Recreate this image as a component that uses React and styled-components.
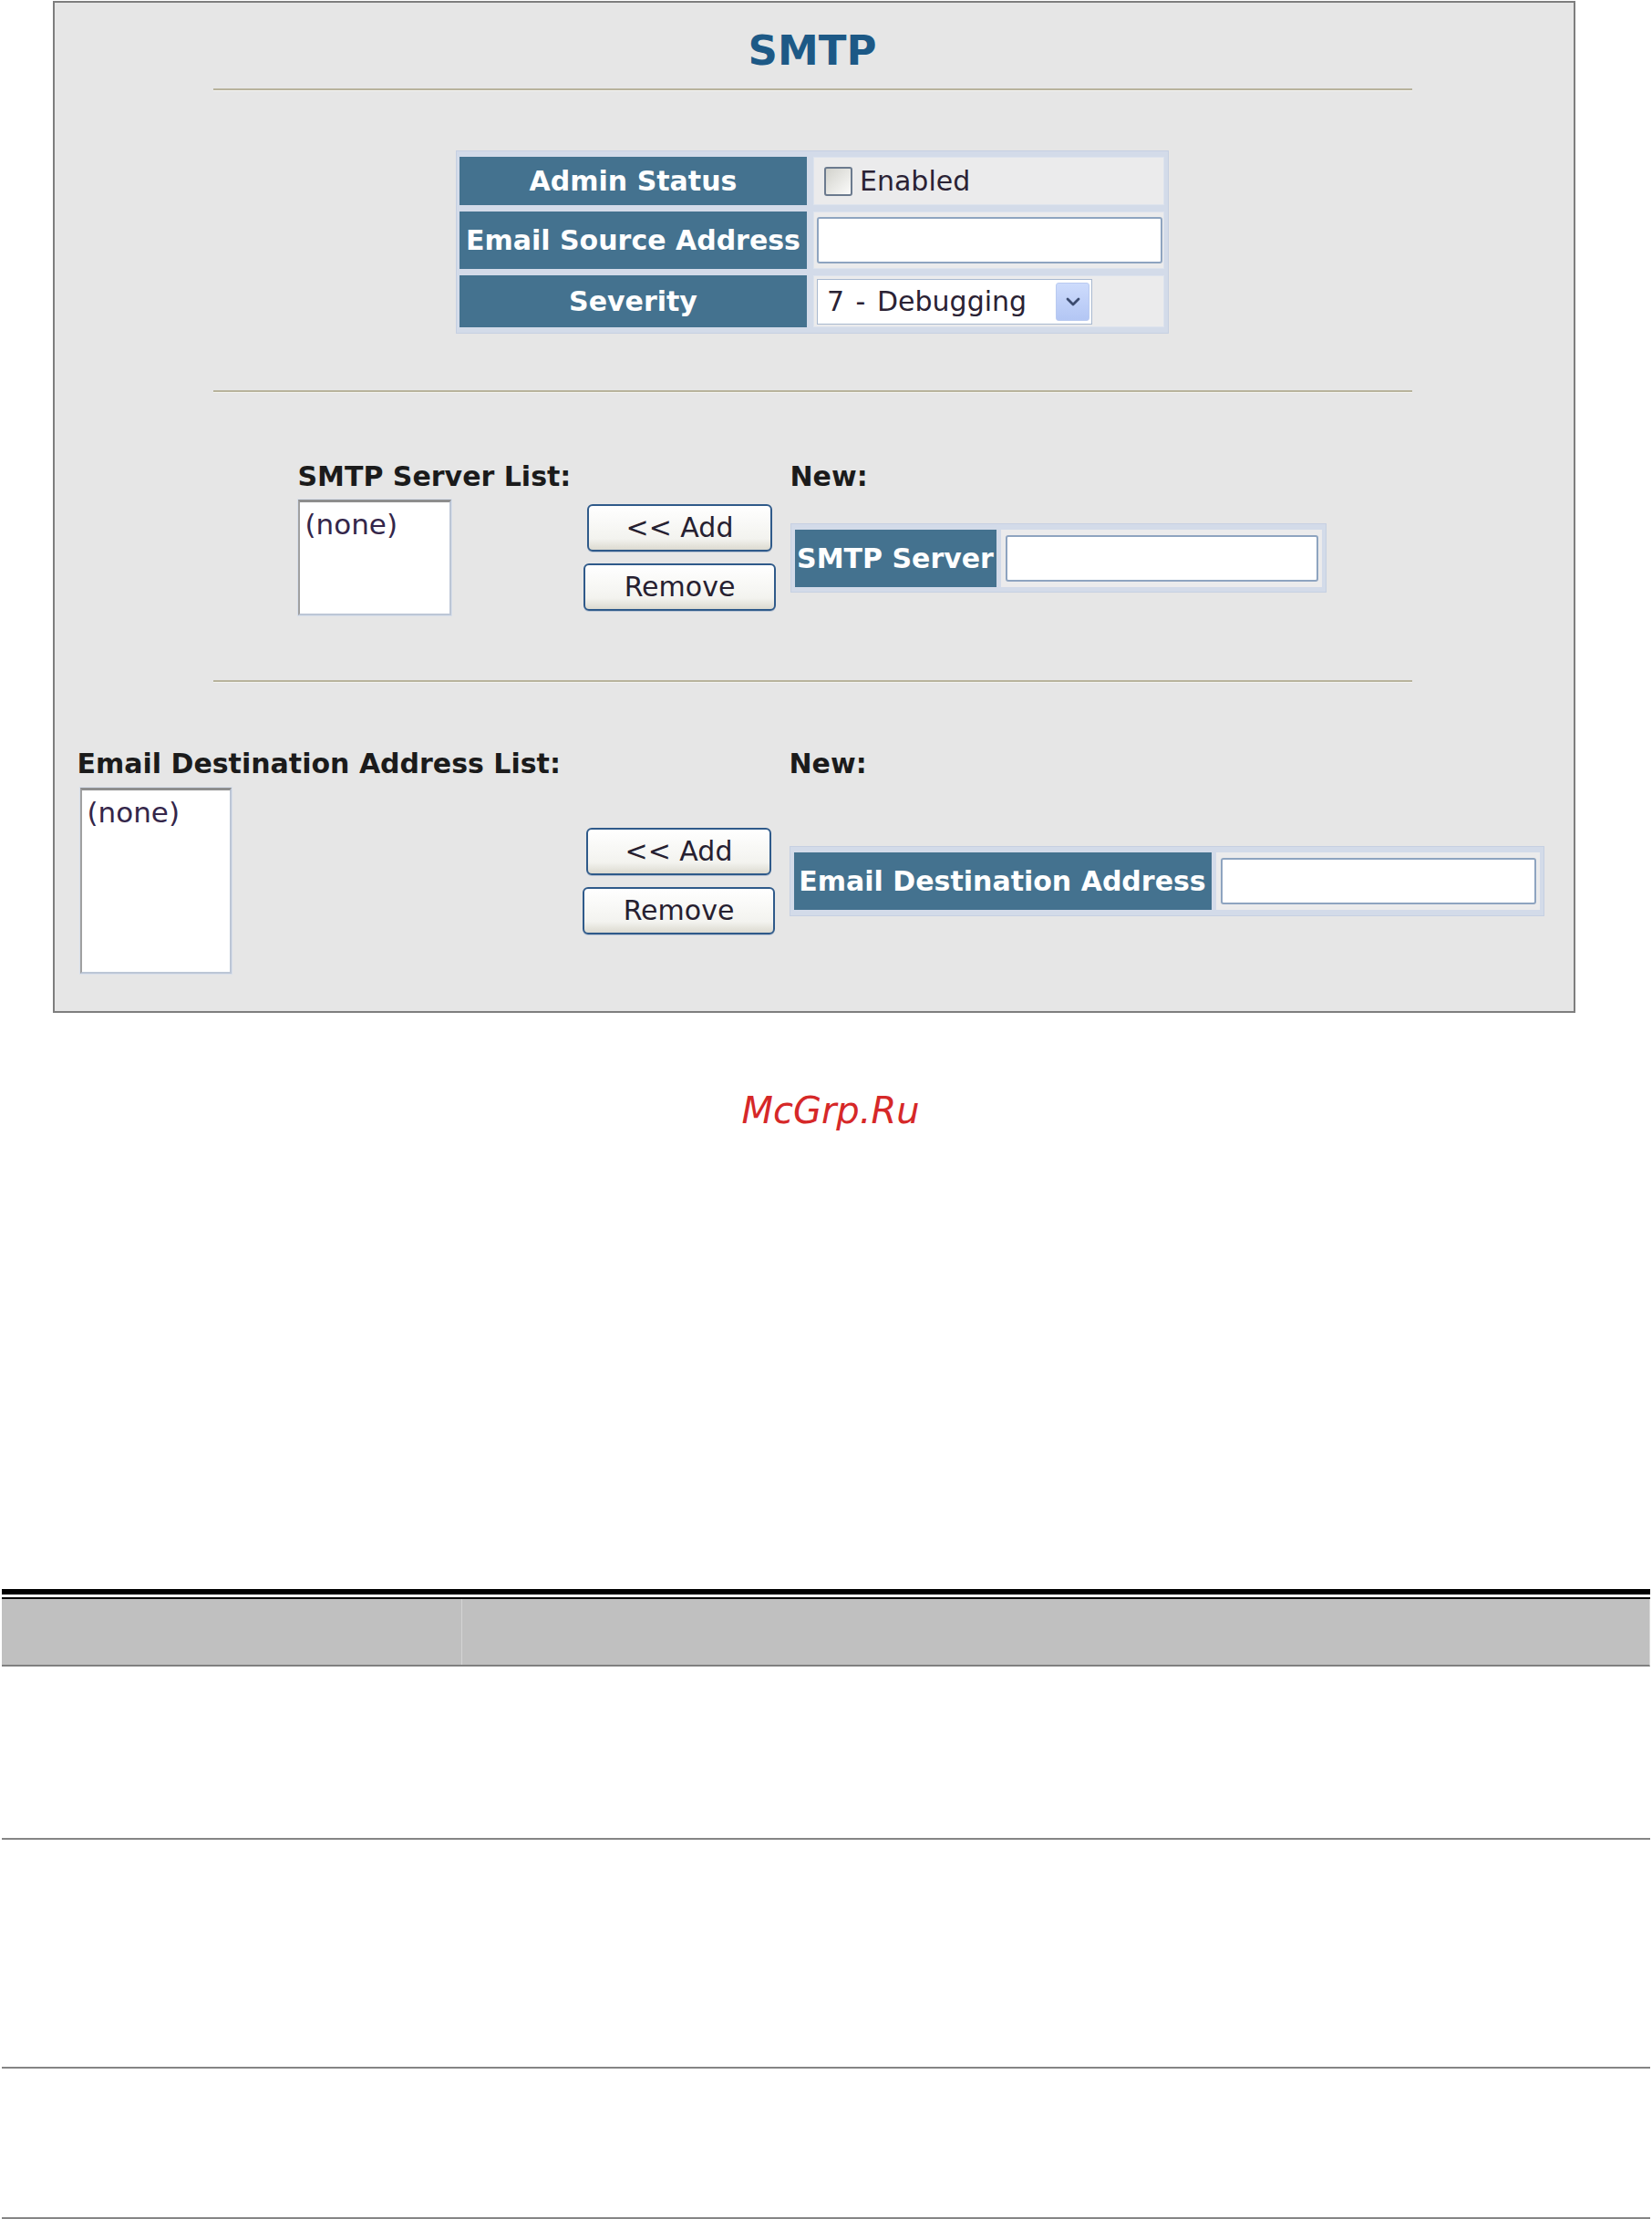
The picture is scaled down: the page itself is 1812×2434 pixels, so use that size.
import styled, { createGlobalStyle } from "styled-components";

const GlobalStyle = createGlobalStyle`
  html, body {
    margin: 0;
    padding: 0;
    background: #fff;
  }
  body {
    font-family: "DejaVu Sans", Verdana, sans-serif;
    color: #1a1a1a;
  }
  * {
    box-sizing: border-box;
  }
`;

const Page = styled.div`
  width: 1812px;
  height: 2434px;
  padding-top: 1px;
  overflow: hidden;
`;

const Panel = styled.section`
  margin-left: 58px;
  width: 1670px;
  height: 1110px;
  border: 2px solid #7e7e7e;
  background: #e6e6e6;
  padding-right: 4px;
  display: flex;
  flex-direction: column;
  align-items: center;
`;

const Title = styled.h1`
  margin: 27px 0 0;
  font-size: 45px;
  line-height: 52px;
  font-weight: bold;
  color: #1d5986;
`;

const Rule = styled.hr`
  margin: ${(p) => p.$top}px 0 0;
  width: 1315px;
  height: 3px;
  border: 0;
  border-top: 2px solid #b8b39c;
  border-bottom: 1px solid #f3f3f0;
`;

/* settings table */
const SettingsTable = styled.div`
  margin-top: 65px;
  display: grid;
  grid-template-columns: 381px 385px;
  grid-template-rows: 53px 63px 57px;
  gap: 7px;
  padding: 6px 4px 6px 3px;
  border: 1px solid #c6d0e2;
  background: #d3dbe9;
`;

const LabelCell = styled.div`
  display: flex;
  align-items: center;
  justify-content: center;
  background: #44728f;
  color: #fff;
  font-size: 30px;
  font-weight: bold;
  white-space: nowrap;
  overflow: hidden;
`;

const ValueCell = styled.div`
  display: flex;
  align-items: center;
  padding: 0 2px 0 ${(p) => p.$left || 4}px;
  background: #ebebec;
  box-shadow: inset 0 0 0 1px #dde3ed;
  font-size: 30px;
  color: #2a2234;
`;

const Checkbox = styled.span`
  display: inline-block;
  width: 31px;
  height: 32px;
  margin-right: 8px;
  border: 2px solid #6b7a8e;
  border-radius: 3px;
  background: linear-gradient(135deg, #d2d2cc, #fbfbfa);
`;

const TextInput = styled.input`
  width: ${(p) => (p.$width ? `${p.$width}px` : "100%")};
  height: 51px;
  margin: 0;
  padding: 0 6px;
  border: 2px solid #8ea4c0;
  border-radius: 3px;
  background: #fff;
  font: 30px "DejaVu Sans", Verdana, sans-serif;
  outline: none;
`;

const SelectBox = styled.div`
  width: 302px;
  height: 50px;
  display: flex;
  align-items: center;
  justify-content: space-between;
  padding: 0 2px 0 10px;
  border: 1px solid #a8b8cf;
  background: #fff;
  font-size: 30px;
  word-spacing: 3px;
  color: #2a2234;
  white-space: nowrap;
`;

const SelectArrow = styled.span`
  width: 37px;
  height: 42px;
  display: flex;
  align-items: center;
  justify-content: center;
  border: 1px solid #b9caf0;
  border-radius: 3px;
  background: linear-gradient(#cddbfc, #b3c6f4);
`;

/* list sections */
const ListSection = styled.div`
  margin-top: ${(p) => p.$top}px;
  display: grid;
  grid-template-columns: ${(p) => p.$first}px 212px ${(p) => p.$last}px;
  grid-template-rows: 36px auto;
  column-gap: 15px;
  row-gap: ${(p) => p.$rowGap}px;
  align-items: center;
`;

const ListHeading = styled.div`
  font-size: 30px;
  line-height: 36px;
  font-weight: bold;
  color: #1b1b1b;
  white-space: nowrap;
`;

const ListBox = styled.div`
  justify-self: start;
  margin-left: ${(p) => p.$left || 0}px;
  width: ${(p) => p.$width}px;
  height: ${(p) => p.$height}px;
  padding: 6px 6px;
  background: #fff;
  border: 2px solid #bcc6d6;
  border-top: 3px solid #8e8e8e;
  border-left-color: #a0a0a0;
  box-shadow: 0 0 0 1px #d8dfea;
  font-size: 31px;
  line-height: 36px;
  color: #34264a;
`;

const ButtonStack = styled.div`
  display: flex;
  flex-direction: column;
  align-items: center;
  gap: 13px;
`;

const Button = styled.button`
  width: ${(p) => p.$width}px;
  height: 52px;
  margin: 0;
  padding: 0;
  border: 2px solid #2f5a8a;
  border-radius: 6px;
  background: linear-gradient(#ffffff, #f3f3ef 75%, #dcdad0);
  box-shadow: 0 1px 0 #b9c4d4;
  font: 30px "DejaVu Sans", Verdana, sans-serif;
  color: #262030;
  line-height: 1;
`;

const NewTable = styled.div`
  justify-self: start;
  display: flex;
  gap: 5px;
  padding: 6px 4px ${(p) => p.$bottom}px;
  border: 1px solid #c6d0e2;
  background: #d3dbe9;
`;

const NewLabel = styled(LabelCell)`
  width: ${(p) => p.$width}px;
  height: 63px;
`;

const NewValue = styled.div`
  flex: 1;
  display: flex;
  align-items: center;
  padding-left: 5px;
  padding-right: 4px;
  background: #ebebec;
`;

/* page footer area */
const Watermark = styled.div`
  margin-top: 84px;
  padding-left: 10px;
  text-align: center;
  font-family: "DejaVu Sans", sans-serif;
  font-style: italic;
  font-size: 40px;
  line-height: 46px;
  color: #d62828;
`;

const DocTable = styled.div`
  margin-top: 502px;
  margin-left: 2px;
  width: 1808px;
`;

const DoubleRule = styled.div`
  height: 11px;
  border-top: 6px solid #000;
  border-bottom: 2px solid #000;
`;

const HeaderRow = styled.div`
  display: grid;
  grid-template-columns: 504px 1fr;
  height: 74px;
  background: #c0c0c0;
  border-bottom: 2px solid #808080;
  border-right: 1px solid #dadada;
`;

const HeaderCell = styled.div`
  & + & {
    border-left: 1px solid #d4d4d4;
  }
`;

const BodyRow = styled.div`
  height: ${(p) => p.$height}px;
  border-bottom: 2px solid #858585;
`;

function Chevron() {
  return (
    <svg width="18" height="12" viewBox="0 0 18 12">
      <path
        d="M3 3 L9 9 L15 3"
        fill="none"
        stroke="#3c4c70"
        strokeWidth="2.8"
        strokeLinecap="round"
        strokeLinejoin="round"
      />
    </svg>
  );
}

function ListPicker({ heading, first, last, rowGap, top, box, label, labelWidth, inputWidth, bottom }) {
  return (
    <ListSection $first={first} $last={last} $rowGap={rowGap} $top={top}>
      <ListHeading>{heading}</ListHeading>
      <div />
      <ListHeading>New:</ListHeading>

      <ListBox $width={box.width} $height={box.height} $left={box.left}>
        (none)
      </ListBox>
      <ButtonStack>
        <Button type="button" $width={203}>
          &lt;&lt; Add
        </Button>
        <Button type="button" $width={211}>
          Remove
        </Button>
      </ButtonStack>
      <NewTable $bottom={bottom}>
        <NewLabel $width={labelWidth}>{label}</NewLabel>
        <NewValue>
          <TextInput type="text" $width={inputWidth} />
        </NewValue>
      </NewTable>
    </ListSection>
  );
}

export default function App() {
  return (
    <Page>
      <GlobalStyle />
      <Panel>
        <Title>SMTP</Title>
        <Rule $top={15} />

        <SettingsTable>
          <LabelCell>Admin Status</LabelCell>
          <ValueCell $left={12}>
            <Checkbox />
            Enabled
          </ValueCell>
          <LabelCell>Email Source Address</LabelCell>
          <ValueCell>
            <TextInput type="text" />
          </ValueCell>
          <LabelCell>Severity</LabelCell>
          <ValueCell>
            <SelectBox>
              7 - Debugging
              <SelectArrow>
                <Chevron />
              </SelectArrow>
            </SelectBox>
          </ValueCell>
        </SettingsTable>

        <Rule $top={62} />

        <ListPicker
          heading="SMTP Server List:"
          first={298}
          last={589}
          rowGap={7}
          top={74}
          box={{ width: 168, height: 127 }}
          label="SMTP Server"
          labelWidth={221}
          inputWidth={343}
          bottom={5}
        />

        <Rule $top={71} />

        <ListPicker
          heading="Email Destination Address List:"
          first={539}
          last={832}
          rowGap={8}
          top={71}
          box={{ width: 166, height: 204, left: 3 }}
          label="Email Destination Address"
          labelWidth={458}
          inputWidth={346}
          bottom={6}
        />
      </Panel>

      <Watermark>McGrp.Ru</Watermark>

      <DocTable>
        <DoubleRule />
        <HeaderRow>
          <HeaderCell />
          <HeaderCell />
        </HeaderRow>
        <BodyRow $height={190} />
        <BodyRow $height={251} />
        <BodyRow $height={165} />
      </DocTable>
    </Page>
  );
}
